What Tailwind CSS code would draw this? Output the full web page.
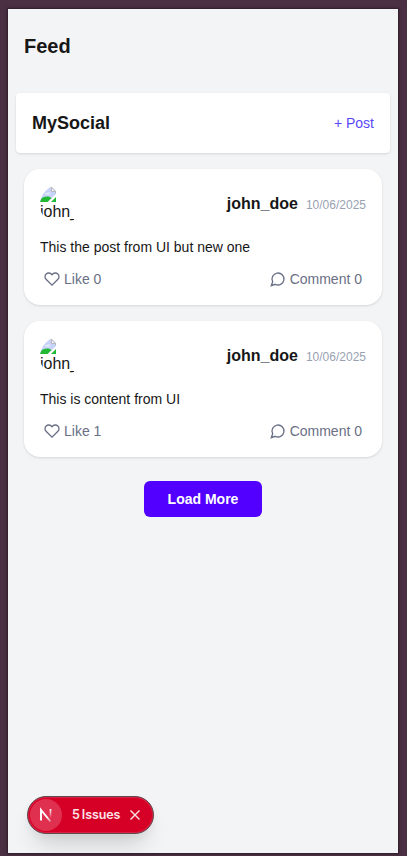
<!DOCTYPE html>
<html lang="en">
<head>
<meta charset="utf-8">
<title>Feed</title>
<script src="https://cdn.jsdelivr.net/npm/@tailwindcss/browser@4"></script>
</head>
<body class="h-[856px] overflow-hidden bg-[#4a3042] pt-[9px] pl-2 font-['Liberation_Sans',Arial,sans-serif] text-[#171717]">
<svg class="hidden">
  <symbol id="heart" viewBox="0 0 24 24"><path d="M20.84 4.61a5.5 5.5 0 0 0-7.78 0L12 5.67l-1.06-1.06a5.5 5.5 0 0 0-7.78 7.78l1.06 1.06L12 21.23l7.78-7.78 1.06-1.06a5.5 5.5 0 0 0 0-7.78z"/></symbol>
  <symbol id="comment" viewBox="0 0 24 24"><path d="M7.9 20A9 9 0 1 0 4 16.1L2 22Z"/></symbol>
  <symbol id="broken" viewBox="0 0 16 16">
    <path d="M0 0H12L16 4V7L7.500 15H0Z" fill="#c6d2f7"/>
    <path d="M5 7.500C5 6 6.500 5.500 7.500 6C8.500 4.500 10.500 5.500 10.500 7.500Z" fill="#e3e9fc"/>
    <path d="M0 15V13C2 10.500 4.500 9.500 7 9.500C9 9.500 10.500 10.200 11.500 11L7.500 15Z" fill="#20b834"/>
    <path d="M11 15L16 10V15Z" fill="#20b834"/>
    <path d="M11.500 .5V4.500H15.500V6.500M9 .5H11.500L15.500 4.500" fill="none" stroke="#b9b9bd"/>
    <path d="M12 1.500V4H14.500Z" fill="#f4f4f6"/>
  </symbol>
</svg>
<main class="relative h-[844px] w-[390px] bg-[#f3f4f6] shadow-[0_0_2px_1px_rgba(20,8,20,0.5)]">
  <header class="flex h-[84px] items-start px-4 pt-[23px]">
    <h1 class="text-xl leading-7 font-bold">Feed</h1>
  </header>
  <nav class="mx-2 flex h-[60px] items-center justify-between rounded-sm bg-white px-4 shadow-sm">
    <span class="text-lg font-bold">MySocial</span>
    <a class="text-sm text-[#5a48f8]">+ Post</a>
  </nav>
  <section class="flex flex-col gap-4 px-4 pt-4">
    <article class="h-[136px] rounded-2xl bg-white p-4 shadow-sm">
      <div class="flex h-10 items-center justify-between">
        <div class="h-10 w-10 overflow-hidden rounded-full pt-0.5">
          <svg class="block h-4 w-4"><use href="#broken"/></svg>
          <div class="text-base leading-[18px]">john_</div>
        </div>
        <div class="flex items-center gap-2"><span class="-mt-0.5 text-base font-bold">john_doe</span><span class="text-xs text-[#99a1b3]">10/06/2025</span></div>
      </div>
      <p class="mt-3 text-sm">This the post from UI but new one</p>
      <div class="mt-3 flex items-center justify-between px-1 text-sm text-[#6a7085]">
        <span class="flex items-center gap-1"><svg class="h-4 w-4 fill-none stroke-current stroke-2"><use href="#heart"/></svg>Like 0</span>
        <span class="flex items-center gap-1"><svg class="h-4 w-4 fill-none stroke-current stroke-2"><use href="#comment"/></svg>Comment 0</span>
      </div>
    </article>
    <article class="h-[136px] rounded-2xl bg-white p-4 shadow-sm">
      <div class="flex h-10 items-center justify-between">
        <div class="h-10 w-10 overflow-hidden rounded-full pt-0.5">
          <svg class="block h-4 w-4"><use href="#broken"/></svg>
          <div class="text-base leading-[18px]">john_</div>
        </div>
        <div class="flex items-center gap-2"><span class="-mt-0.5 text-base font-bold">john_doe</span><span class="text-xs text-[#99a1b3]">10/06/2025</span></div>
      </div>
      <p class="mt-3 text-sm">This is content from UI</p>
      <div class="mt-3 flex items-center justify-between px-1 text-sm text-[#6a7085]">
        <span class="flex items-center gap-1"><svg class="h-4 w-4 fill-none stroke-current stroke-2"><use href="#heart"/></svg>Like 1</span>
        <span class="flex items-center gap-1"><svg class="h-4 w-4 fill-none stroke-current stroke-2"><use href="#comment"/></svg>Comment 0</span>
      </div>
    </article>
  </section>
  <button class="mx-auto mt-6 block h-9 w-[118px] rounded-md bg-[#5200ff] text-sm font-bold text-white">Load More</button>

  <!-- Floating issues badge -->
  <div class="absolute top-[787px] left-[19px] flex h-[38px] w-[127px] items-center rounded-full border border-[#5e4a50] bg-[#d60027] pl-0.5 font-['Inter',sans-serif] text-white shadow-[inset_0_0_0_1px_rgba(255,255,255,0.12),0_16px_24px_-8px_rgba(0,0,0,0.18),0_4px_8px_rgba(0,0,0,0.05)]">
    <span class="flex h-8 w-8 items-center justify-center rounded-full bg-[#e0304f]">
      <svg class="h-4 w-4" viewBox="0 0 16 16" fill="none">
        <defs>
          <linearGradient id="n1" x1="3" y1="3" x2="13" y2="15" gradientUnits="userSpaceOnUse"><stop offset=".6" stop-color="#fff"/><stop offset="1" stop-color="#fff" stop-opacity=".3"/></linearGradient>
          <linearGradient id="n2" x1="0" y1="2" x2="0" y2="11" gradientUnits="userSpaceOnUse"><stop stop-color="#fff"/><stop offset="1" stop-color="#fff" stop-opacity="0"/></linearGradient>
        </defs>
        <path d="M3 13.500V3L12.500 14.500" stroke="url(#n1)" stroke-width="1.900"/>
        <path d="M12.500 2V11" stroke="url(#n2)" stroke-width="1.700"/>
      </svg>
    </span>
    <span class="ml-2.5 w-[50px] text-[12.5px] font-semibold tracking-[-0.1px] whitespace-nowrap text-white/90 [word-spacing:-1px]">5 Issues</span>
    <svg class="ml-[7px] h-3 w-3 fill-none stroke-white/90 stroke-[1.4]" viewBox="0 0 12 12"><path d="M1.500 1.500L10.500 10.500M10.500 1.500L1.500 10.500"/></svg>
  </div>
</main>
</body>
</html>
